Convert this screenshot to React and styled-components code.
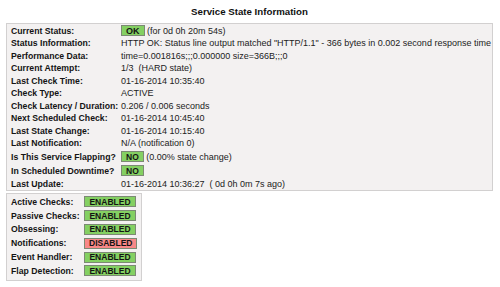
import React from 'react'
import styled, { createGlobalStyle } from 'styled-components'

const Global = createGlobalStyle`
    html, body {
        margin: 0;
        padding: 0;
        background: #ffffff;
    }
    body {
        font-family: "Liberation Sans", Arial, sans-serif;
        color: #111;
    }
`

const Page = styled.div`
    width: 500px;
    height: 287px;
    overflow: hidden;
    padding: 0 7px 0 6px;
    box-sizing: border-box;
`

const Title = styled.div`
    height: 23px;
    line-height: 23px;
    text-align: center;
    font-size: 9.7px;
    font-weight: bold;
    color: #111;
`

const Box = styled.div`
    display: grid;
    grid-template-columns: ${p => p.$labelWidth}px auto;
    width: ${p => (p.$width ? p.$width + 'px' : 'auto')};
    box-sizing: border-box;
    background: #f3f1f1;
    border: 1px solid #d2d0d0;
    padding: ${p => p.$pad};
`

const Label = styled.div`
    display: flex;
    align-items: center;
    height: ${p => p.$h}px;
    font-size: 8.7px;
    font-weight: bold;
    color: #141414;
    white-space: nowrap;
`

const Value = styled.div`
    display: flex;
    align-items: center;
    gap: 2.5px;
    height: ${p => p.$h}px;
    font-size: 9px;
    color: #222;
    white-space: nowrap;
`

const Badge = styled.span`
    display: inline-flex;
    align-items: center;
    justify-content: center;
    box-sizing: border-box;
    height: 11px;
    min-width: ${p => (p.$wide ? '52px' : '0')};
    padding: 0 4px;
    border: 1px solid #7c8a74;
    background: ${p => (p.$bad ? '#f88888' : '#84d062')};
    font-size: ${p => (p.$big ? '9px' : '8.5px')};
    font-weight: bold;
    color: #141414;
`

const Spacer = styled.div`
    height: 2px;
`

const rows = [
    { label: 'Current Status:', badge: 'OK', big: true, text: '(for 0d 0h 20m 54s)', h: 13 },
    { label: 'Status Information:', text: 'HTTP OK: Status line output matched "HTTP/1.1" - 366 bytes in 0.002 second response time' },
    { label: 'Performance Data:', text: 'time=0.001816s;;;0.000000 size=366B;;;0' },
    { label: 'Current Attempt:', text: '1/3\u00a0\u00a0(HARD state)' },
    { label: 'Last Check Time:', text: '01-16-2014 10:35:40' },
    { label: 'Check Type:', text: 'ACTIVE' },
    { label: 'Check Latency / Duration:', text: '0.206 / 0.006 seconds' },
    { label: 'Next Scheduled Check:', text: '01-16-2014 10:45:40' },
    { label: 'Last State Change:', text: '01-16-2014 10:15:40' },
    { label: 'Last Notification:', text: 'N/A (notification 0)' },
    { label: 'Is This Service Flapping?', badge: 'NO', text: '(0.00% state change)', h: 14 },
    { label: 'In Scheduled Downtime?', badge: 'NO', h: 14 },
    { label: 'Last Update:', text: '01-16-2014 10:36:27\u00a0\u00a0( 0d 0h 0m 7s ago)' },
]

const checks = [
    ['Active Checks:', true],
    ['Passive Checks:', true],
    ['Obsessing:', true],
    ['Notifications:', false],
    ['Event Handler:', true],
    ['Flap Detection:', true],
]

function App() {
    return (
        <Page>
            <Global />
            <Title>Service State Information</Title>
            <Box $labelWidth={110} $pad="0 4px 0 4px">
                {rows.map(r => (
                    <React.Fragment key={r.label}>
                        <Label $h={r.h || 12.5}>{r.label}</Label>
                        <Value $h={r.h || 12.5}>
                            {r.badge && <Badge $big={r.big}>{r.badge}</Badge>}
                            {r.text && <span>{r.text}</span>}
                        </Value>
                    </React.Fragment>
                ))}
            </Box>
            <Spacer />
            <Box $labelWidth={73} $width={136} $pad="1px 4px 2px 4px">
                {checks.map(([label, on]) => (
                    <React.Fragment key={label}>
                        <Label $h={13.8}>{label}</Label>
                        <Value $h={13.8}>
                            <Badge $wide $bad={!on}>{on ? 'ENABLED' : 'DISABLED'}</Badge>
                        </Value>
                    </React.Fragment>
                ))}
            </Box>
        </Page>
    )
}

export default App
